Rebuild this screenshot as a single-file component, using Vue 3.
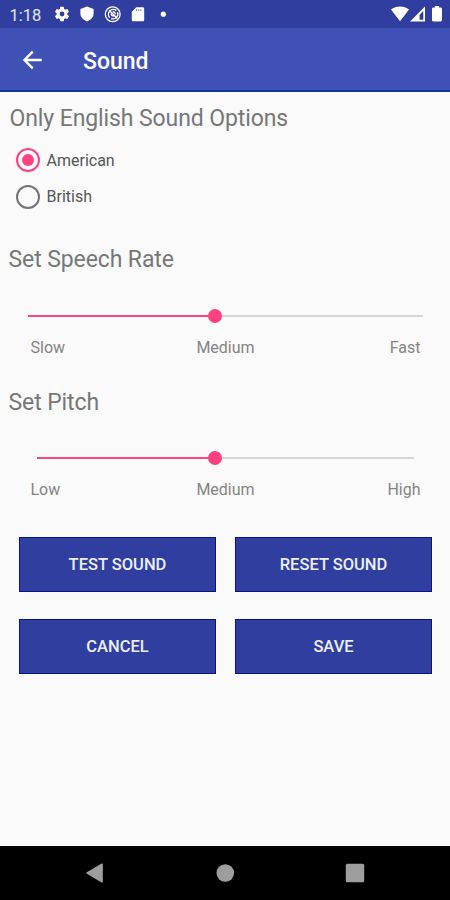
<template>
  <div class="screen">
    <!-- Status bar -->
    <div class="status-bar">
      <span class="clock">1:18</span>
      <div class="status-icons">
        <svg width="18" height="18" viewBox="0 0 24 24">
          <path fill="#fff" d="M19.14 12.94a7 7 0 0 0 .06-.94 7 7 0 0 0-.07-.94l2.03-1.58a.5.5 0 0 0 .12-.61l-1.92-3.32a.49.49 0 0 0-.59-.22l-2.39.96a7 7 0 0 0-1.62-.94l-.36-2.54a.48.48 0 0 0-.48-.41h-3.84a.47.47 0 0 0-.47.41l-.36 2.54a7.3 7.3 0 0 0-1.62.94l-2.39-.96a.48.48 0 0 0-.59.22L2.74 8.87a.47.47 0 0 0 .12.61l2.03 1.58a6.4 6.4 0 0 0-.02 1.88l-2.03 1.58a.5.5 0 0 0-.12.61l1.92 3.32c.12.22.37.29.59.22l2.39-.96c.5.38 1.03.7 1.62.94l.36 2.54c.05.24.24.41.48.41h3.84c.24 0 .44-.17.47-.41l.36-2.54a7.3 7.3 0 0 0 1.62-.94l2.39.96c.22.08.47 0 .59-.22l1.92-3.32a.47.47 0 0 0-.12-.61zM12 15.2a3.2 3.2 0 1 1 0-6.4 3.2 3.2 0 0 1 0 6.4z" />
        </svg>
        <svg width="18" height="18" viewBox="0 0 18 18">
          <path fill="#fff" d="M9 1.400 15.600 4v4.600c0 3.600-2.800 6.600-6.600 7.800-3.800-1.200-6.600-4.200-6.600-7.800V4z" />
        </svg>
        <svg width="18" height="18" viewBox="0 0 18 18" fill="none" stroke="#fff">
          <circle cx="8.700" cy="9.200" r="7.400" stroke-width="1.300" />
          <path stroke-width="1.400" d="M5.600 12.600A4.900 4.900 0 0 1 12.400 5.600M13.500 7.200a4.900 4.900 0 0 1-6.300 6.300M5.200 5.200l8.200 8.200M7.200 8.600a2.200 2.200 0 0 0 2.600 2.400M8.800 6.800a2.300 2.300 0 0 1 2.400 2.400" />
        </svg>
        <svg width="18" height="18" viewBox="0 0 18 18">
          <path fill="#fff" d="M7.300 2.300h6.500c.8 0 1.400.6 1.400 1.400v11.200c0 .8-.6 1.400-1.400 1.400H4.200c-.8 0-1.400-.6-1.400-1.400V6.800z" />
          <path stroke="#303f9f" stroke-opacity=".75" stroke-width="1" d="M7.500 4.300V6M9.700 4.300V6M11.900 4.300V6" />
        </svg>
        <svg width="18" height="18" viewBox="0 0 18 18">
          <circle cx="8.300" cy="9.200" r="2.600" fill="#fff" />
        </svg>
      </div>
      <div class="signal-icons">
        <svg width="18" height="16" viewBox="0 0 18 16">
          <path fill="#fff" d="M0 3.400C5-.6 13-.6 18 3.400L9 15.300z" />
        </svg>
        <svg width="15" height="16" viewBox="0 0 15 16">
          <path fill="#fff" fill-rule="evenodd" d="M15 .5V15.500H0zM13.300 5v8.800H9.600V8.800z" />
        </svg>
        <svg class="battery" width="10" height="16" viewBox="0 0 10 16">
          <path fill="#fff" d="M3 0h4v1.500h1.600c.8 0 1.400.6 1.400 1.400v11.200c0 .8-.6 1.400-1.400 1.400H1.400C.6 15.500 0 14.900 0 14.100V2.900c0-.8.6-1.400 1.400-1.400H3z" />
        </svg>
      </div>
    </div>

    <!-- App bar -->
    <header class="app-bar">
      <button class="btn-back" aria-label="Back">
        <svg width="20" height="20" viewBox="0 0 20 20" fill="none" stroke="#fff" stroke-width="2.300">
          <path d="M19.700 10H2.800M10.800 1.600 2.400 10l8.400 8.400" />
        </svg>
      </button>
      <h1 class="title">Sound</h1>
    </header>

    <main class="content">
      <h2 class="heading accent-heading">Only English Sound Options</h2>
      <div class="radio-group">
        <label
          v-for="option in accents"
          :key="option"
          class="radio"
          :class="{ checked: accent === option }"
          @click="accent = option"
        >
          <span class="radio-ring"><span class="radio-dot"></span></span>
          <span class="radio-label">{{ option }}</span>
        </label>
      </div>

      <section v-for="slider in sliders" :key="slider.id" class="slider-section" :class="slider.id">
        <h2 class="heading">{{ slider.title }}</h2>
        <div class="slider">
          <div class="slider-fill" :style="{ width: slider.value + '%' }"></div>
          <div class="slider-thumb"></div>
          <div class="slider-rest"></div>
        </div>
        <div class="slider-labels">
          <span v-for="label in slider.labels" :key="label">{{ label }}</span>
        </div>
      </section>

      <div class="buttons">
        <button v-for="button in buttons" :key="button" class="btn">{{ button }}</button>
      </div>
    </main>

    <!-- Navigation bar -->
    <nav class="nav-bar">
      <svg width="20" height="20" viewBox="0 0 20 20">
        <path fill="#9e9e9e" d="M16.600.6c.7-.4 1.200-.1 1.200.7v17.400c0 .8-.5 1.100-1.200.7L1.800 10.700c-.6-.4-.6-1 0-1.400z" />
      </svg>
      <svg width="20" height="20" viewBox="0 0 20 20">
        <circle cx="10.300" cy="10" r="8.800" fill="#9e9e9e" />
      </svg>
      <svg width="20" height="20" viewBox="0 0 20 20">
        <rect x=".8" y=".8" width="18.400" height="18.400" rx="1.500" fill="#9e9e9e" />
      </svg>
    </nav>
  </div>
</template>

<script setup>
import { ref } from 'vue'

const accents = ['American', 'British']
const accent = ref('American')

const sliders = ref([
  { id: 'rate', title: 'Set Speech Rate', value: 47.3, labels: ['Slow', 'Medium', 'Fast'] },
  { id: 'pitch', title: 'Set Pitch', value: 47.3, labels: ['Low', 'Medium', 'High'] }
])

const buttons = ['TEST SOUND', 'RESET SOUND', 'CANCEL', 'SAVE']
</script>

<style>
body {
  margin: 0;
}
</style>

<style scoped>
.screen {
  display: flex;
  flex-direction: column;
  width: 450px;
  height: 900px;
  overflow: hidden;
  background: #fafafa;
  font-family: Roboto, "Liberation Sans", sans-serif;
}

button {
  border: 0;
  padding: 0;
  font-family: inherit;
}

h1,
h2 {
  margin: 0;
}

svg {
  display: block;
}

/* Status bar */
.status-bar {
  display: flex;
  align-items: center;
  box-sizing: border-box;
  height: 28px;
  padding: 0 8px 0 9.5px;
  background: #303f9f;
  color: #e4e7f8;
}

.clock {
  width: 43px;
  padding-top: 3px;
  font-size: 16.5px;
  line-height: 20px;
}

.status-icons {
  display: flex;
  gap: 7.5px;
}

.signal-icons {
  display: flex;
  align-items: center;
  gap: 1px;
  margin-left: auto;
}

.battery {
  margin-left: 6px;
}

/* App bar */
.app-bar {
  display: flex;
  align-items: center;
  box-sizing: border-box;
  height: 64px;
  padding: 2px 0 0 22px;
  border-bottom: 2px solid #0c36a8;
  background: #3f51b5;
}

.btn-back {
  background: none;
}

.title {
  margin-left: 41px;
  padding-top: 4px;
  color: #fff;
  font-size: 23px;
  font-weight: 500;
  line-height: 28px;
}

/* Content */
.content {
  flex: 1;
}

.heading {
  padding-left: 8.5px;
  color: #777;
  font-size: 23px;
  font-weight: 400;
  letter-spacing: -0.1px;
  line-height: 28px;
}

.accent-heading {
  padding: 13px 0 0 9.5px;
}

.radio-group {
  padding: 9px 0 0 16px;
}

.radio {
  display: flex;
  align-items: center;
  height: 36.5px;
}

.radio-ring {
  display: flex;
  align-items: center;
  justify-content: center;
  box-sizing: border-box;
  width: 24px;
  height: 24px;
  border: 2px solid #737373;
  border-radius: 50%;
}

.radio-dot {
  width: 12px;
  height: 12px;
  border-radius: 50%;
}

.checked .radio-ring {
  border-color: #ff4081;
}

.checked .radio-dot {
  background: #ff4081;
}

.radio-label {
  margin-left: 6.5px;
  color: #555;
  font-size: 16px;
}

/* Sliders */
.rate {
  padding-top: 31px;
}

.pitch {
  padding-top: 30px;
}

.slider {
  display: flex;
  align-items: center;
  height: 14px;
  margin: 35px 27px 0 28px;
}

.pitch .slider {
  margin: 34px 36px 0 37px;
}

.slider-fill {
  height: 2px;
  background: #f9487f;
}

.slider-thumb {
  width: 14px;
  height: 14px;
  margin: 0 -7px;
  border-radius: 50%;
  background: #ff4081;
  z-index: 1;
}

.slider-rest {
  flex: 1;
  height: 2px;
  background: #d6d6d6;
}

.slider-labels {
  display: grid;
  grid-template-columns: repeat(3, 1fr);
  padding: 14px 29.5px 0 30.5px;
  color: #848484;
  font-size: 16px;
  line-height: 22px;
  text-align: center;
}

.slider-labels span:first-child {
  text-align: left;
}

.slider-labels span:last-child {
  text-align: right;
}

/* Buttons */
.buttons {
  display: grid;
  grid-template-columns: 197px 197px;
  gap: 27px 19px;
  padding: 36px 0 0 19px;
}

.btn {
  box-sizing: border-box;
  height: 55px;
  border: 1px solid #07128c;
  background: #303f9f;
  color: #eceefa;
  font-size: 16.5px;
  font-weight: 500;
}

/* Navigation bar */
.nav-bar {
  display: flex;
  align-items: center;
  justify-content: space-between;
  box-sizing: border-box;
  height: 54px;
  padding: 0 85px;
  background: #000;
}
</style>
